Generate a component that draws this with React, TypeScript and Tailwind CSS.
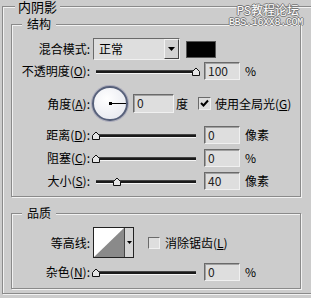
const fieldBox =
  "h-[18px] bg-[#dedede] border border-t-[#6a6a6a] border-l-[#6a6a6a] border-b-[#f0f0f0] border-r-[#f0f0f0] shadow-[inset_1px_1px_0_#a0a0a0] pl-[3px] text-[12px] leading-[16px] text-[#222]";

function Key({ k }: { k: string }) {
  return <span className="underline underline-offset-[1px]">{k}</span>;
}

function Label({ children }: { children: React.ReactNode }) {
  return <div className="w-[78px] shrink-0 text-right whitespace-nowrap">{children}</div>;
}

function Thumb() {
  return (
    <svg width="8" height="9" viewBox="0 0 8 9">
      <path d="M0.5 8.5 V4.5 L4 1 L7.5 4.5 V8.5 Z" fill="#e6e6e6" stroke="#111" />
    </svg>
  );
}

function Slider({ pos }: { pos: number }) {
  return (
    <div className="relative ml-[2px] w-[108px] h-[18px] shrink-0">
      <div className="absolute left-[4px] top-[8px] w-[100px] h-[4px] bg-[#1a1a1a] border-t border-[#444] border-b border-b-[#f4f4f4]" />
      <div className="absolute top-[5px]" style={{ left: pos }}>
        <Thumb />
      </div>
    </div>
  );
}

function SliderRow({
  label,
  value,
  unit,
  pos,
  mt,
}: {
  label: React.ReactNode;
  value: string;
  unit: string;
  pos: number;
  mt: string;
}) {
  return (
    <div className={`flex items-center h-[18px] ${mt}`}>
      <Label>{label}</Label>
      <Slider pos={pos} />
      <div className={`ml-[4px] w-[36px] ${fieldBox}`}>{value}</div>
      <div className="ml-[5px]">{unit}</div>
    </div>
  );
}

function DownArrow() {
  return (
    <svg width="7" height="4" viewBox="0 0 7 4">
      <path d="M0 0 H7 L3.5 4 Z" fill="#000" />
    </svg>
  );
}

const fieldset =
  "border border-[#8a8a8a] shadow-[1px_1px_0_#f2f2f2,inset_1px_1px_0_#f2f2f2]";
const legend = "bg-[#cccccc] text-[12px] leading-[12px]";

export default function App() {
  return (
    <div className="relative w-[311px] h-[298px] overflow-hidden bg-[#cccccc] pl-[2px] text-[12px] text-black font-['Noto_Sans_CJK_SC','Noto_Sans',sans-serif]">
      <fieldset className={`w-[330px] pb-[4px] ${fieldset}`}>
        <legend className="ml-[12px] px-[3px] bg-[#cccccc] text-[13px] leading-[13px]">内阴影</legend>

        {/* 结构 */}
        <fieldset className={`ml-[8px] mt-[5px] w-[290px] pb-[6px] ${fieldset}`}>
          <legend className={`ml-[10px] px-[5px] ${legend}`}>结构</legend>

          <div className="flex items-center h-[22px] mt-[8px]">
            <Label>混合模式:</Label>
            <div className="ml-[3px] flex w-[87px] h-[22px] bg-[#dedede] border border-t-[#6a6a6a] border-l-[#6a6a6a] border-b-[#f0f0f0] border-r-[#f0f0f0]">
              <div className="flex-1 pl-[5px] leading-[20px]">正常</div>
              <div className="w-[15px] flex items-center justify-center bg-[#d2d2d2] border border-[#444] border-t-[#f2f2f2] border-l-[#f2f2f2]">
                <DownArrow />
              </div>
            </div>
            <div className="ml-[6px] w-[30px] h-[17px] bg-black border border-[#555]" />
          </div>

          <SliderRow
            mt="mt-[2px]"
            label={<>不透明度(<Key k="O" />):</>}
            value="100"
            unit="%"
            pos={100}
          />

          <div className="flex items-center h-[35px] mt-[6px]">
            <Label>角度(<Key k="A" />):</Label>
            <div className="relative ml-[2px] w-[36px] h-[35px] rounded-full border-2 border-[#56607a] bg-[radial-gradient(circle_at_40%_35%,#ffffff,#e2e4ec)] shadow-[0_0_0_1px_#aab]">
              <div className="absolute left-[16px] top-[15px] w-[16px] h-[1px] bg-black" />
              <div className="absolute left-[15px] top-[14px] w-[3px] h-[3px] bg-black" />
            </div>
            <div className={`ml-[5px] w-[41px] !h-[19px] ${fieldBox}`}>0</div>
            <div className="ml-[2px]">度</div>
            <div className="ml-[10px] w-[13px] h-[13px] flex items-center justify-center bg-[#dedede] border border-t-[#6a6a6a] border-l-[#6a6a6a] border-b-[#f0f0f0] border-r-[#f0f0f0]">
              <svg width="9" height="9" viewBox="0 0 9 9">
                <path d="M1 4 L3.5 6.5 L8 1.5" fill="none" stroke="#000" strokeWidth="2" />
              </svg>
            </div>
            <div className="ml-[4px] whitespace-nowrap">使用全局光(<Key k="G" />)</div>
          </div>

          <SliderRow mt="mt-[5px]" label={<>距离(<Key k="D" />):</>} value="0" unit="像素" pos={0} />
          <SliderRow mt="mt-[5px]" label={<>阻塞(<Key k="C" />):</>} value="0" unit="%" pos={0} />
          <SliderRow mt="mt-[5px]" label={<>大小(<Key k="S" />):</>} value="40" unit="像素" pos={21} />
        </fieldset>

        {/* 品质 */}
        <fieldset className={`ml-[8px] mt-[10px] w-[290px] pb-[7px] ${fieldset}`}>
          <legend className={`ml-[10px] px-[5px] ${legend}`}>品质</legend>

          <div className="flex items-center h-[31px] mt-[8px]">
            <Label>等高线:</Label>
            <div className="ml-[3px] flex w-[41px] h-[31px] border border-[#222]">
              <svg width="30" height="29" viewBox="0 0 30 29" className="shrink-0">
                <rect width="30" height="29" fill="#ffffff" />
                <polygon points="0,29 30,0 30,29" fill="#8a8a8a" />
              </svg>
              <div className="flex-1 flex items-center justify-center bg-[#d4d4d4] border-l border-[#444]">
                <svg width="5" height="3" viewBox="0 0 5 3">
                  <path d="M0 0 H5 L2.5 3 Z" fill="#000" />
                </svg>
              </div>
            </div>
            <div className="ml-[14px] w-[12px] h-[12px] bg-[#dedede] border border-t-[#6a6a6a] border-l-[#6a6a6a] border-b-[#f0f0f0] border-r-[#f0f0f0]" />
            <div className="ml-[5px] whitespace-nowrap">消除锯齿(<Key k="L" />)</div>
          </div>

          <SliderRow mt="mt-[5px]" label={<>杂色(<Key k="N" />):</>} value="0" unit="%" pos={0} />
        </fieldset>
      </fieldset>

      {/* watermark */}
      <div className="absolute right-[8px] top-[2px] flex flex-col items-end text-white [text-shadow:1px_0_#777,-1px_0_#777,0_1px_#777,0_-1px_#777]">
        <div className="text-[12px] leading-[15px] pr-[4px]">PS教程论坛</div>
        <div className="text-[10px] leading-[12px] font-['Liberation_Mono',monospace] tracking-[-0.3px]">BBS.16XX8.COM</div>
      </div>
    </div>
  );
}
